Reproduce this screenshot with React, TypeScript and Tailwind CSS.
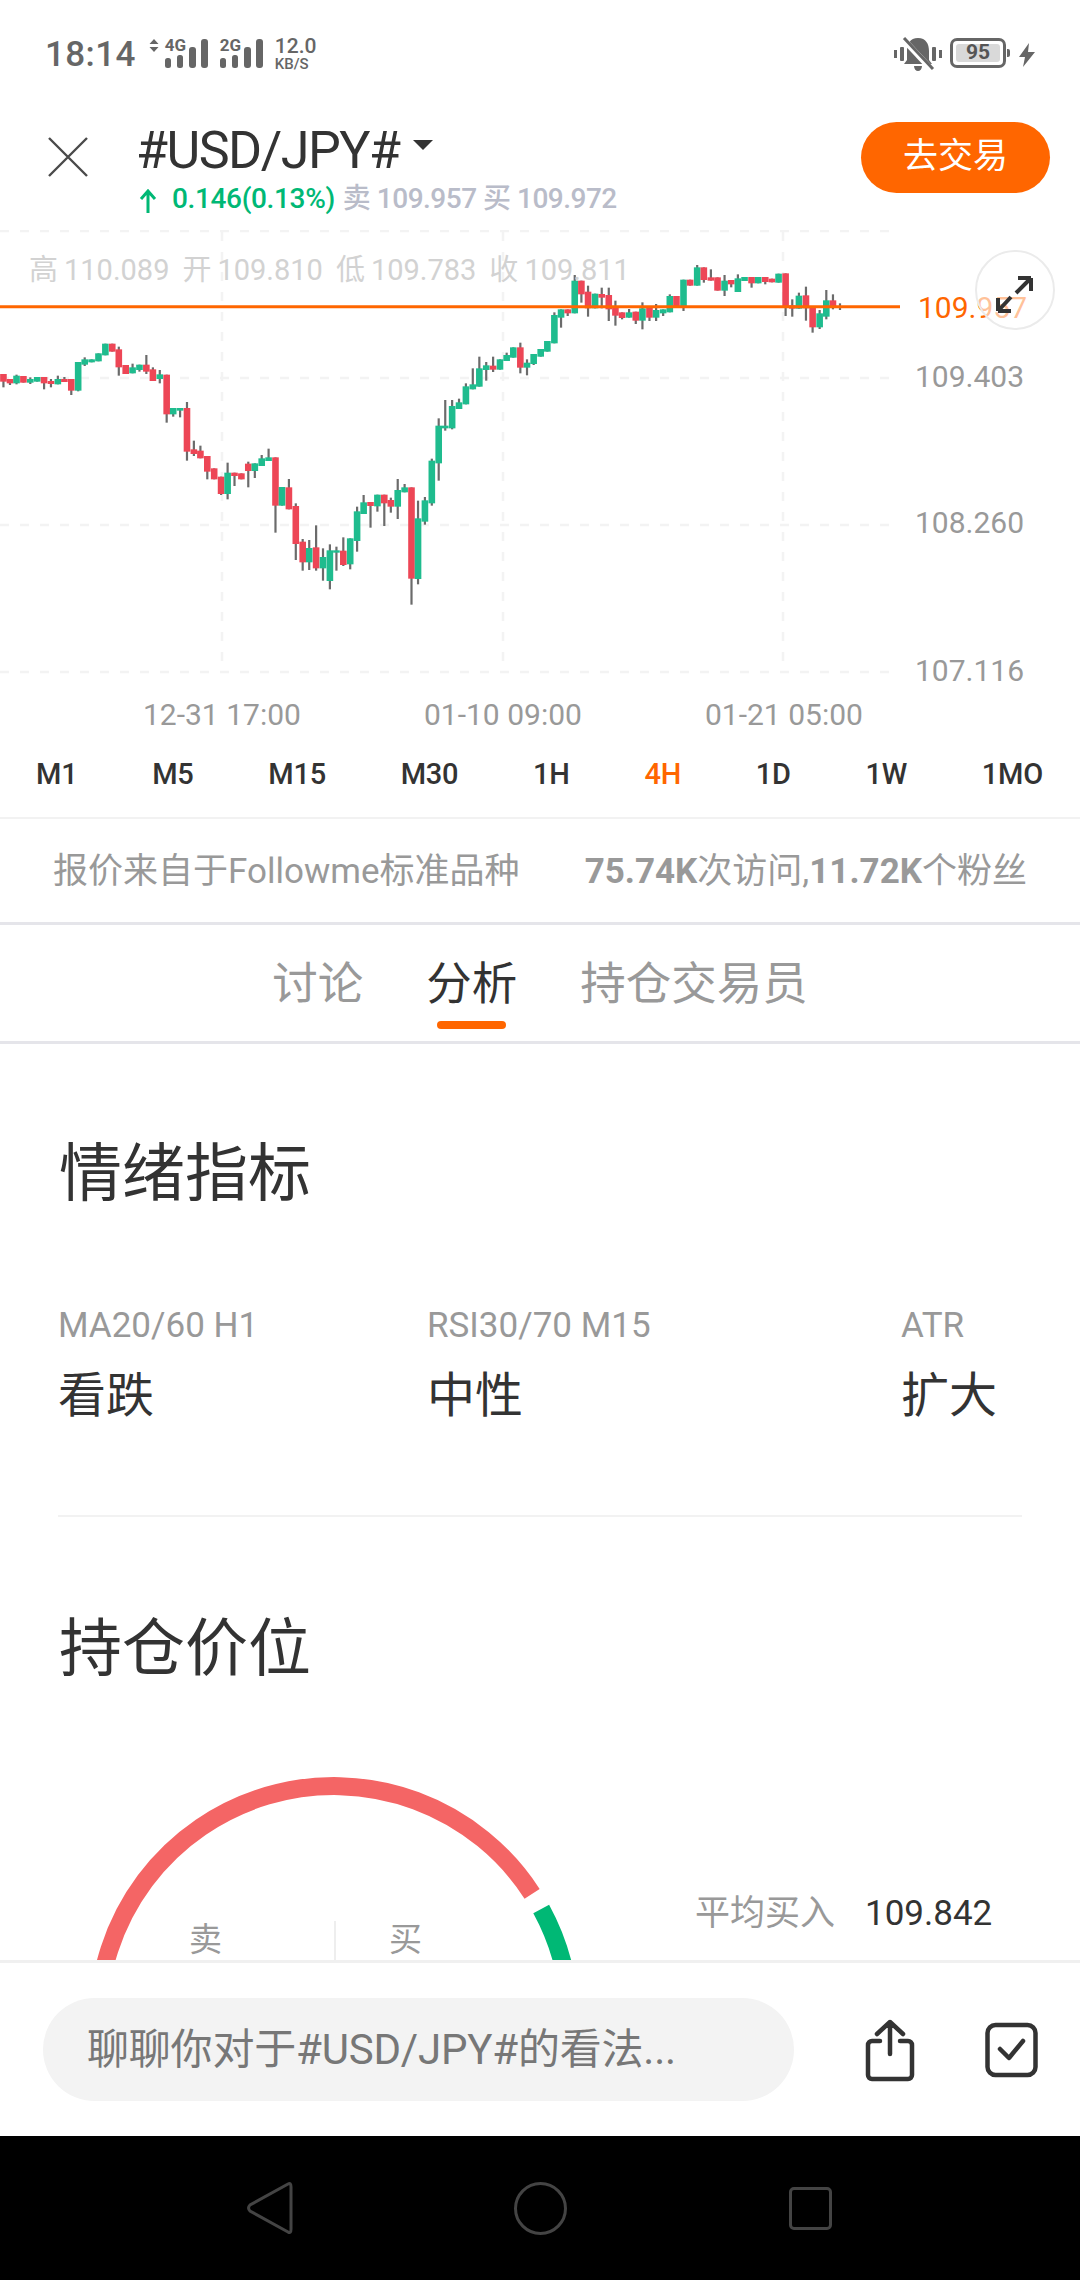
import React from "react";

type C = [number, number, number, number?, number?];
// [zoomX, bodyTop, bodyBottom, wickTop, wickBottom], colour chosen below
const g1: [string, ...C][] = [
  ["r",10,432,455,432,472],["r",29,447,460,447,465],["g",48,437,460,434,463],["r",68,438,458],["g",88,447,458,442,462],
  ["g",108,441,455],["r",128,441,460,441,478],["r",148,453,462,447,472],["g",168,447,463,437,463],["r",187,447,456,441,456],
  ["r",207,447,482,447,495],["g",227,396,482,396,484],["g",246,388,404,382,408],["g",266,388,397],["g",286,370,394],
  ["g",306,341,376],["r",326,341,365],["r",345,358,412,350,437],["r",365,405,432],["g",385,412,430,401,430],
  ["g",405,404,420,404,425],["r",425,404,425,375,432],["r",444,418,453,412,453],["g",464,433,447,420,460],["r",484,434,553,434,578],
  ["g",503,534,553,534,560],["g",523,534,542,534,562],["r",543,534,665,516,692],["r",563,658,672,632,678],["r",582,662,685,647,685],
  ["r",602,678,725,678,748],["r",622,715,748],["r",642,740,792,740,795],["g",661,728,792,698,808],["r",681,728,738,728,768],
  ["r",701,730,748],["r",721,701,723,695,772],["g",740,700,723,700,744],["g",760,685,708,675,708],["g",780,682,693,656,693],
  ["r",800,682,827,682,908],["g",819,771,827],["r",839,772,838,747,838],["r",859,828,942,820,990],["r",879,935,997,927,1022],
  ["g",898,954,997,930,1020],["r",918,952,1015,886,1022],["g",938,981,1015,955,1052],["g",958,961,1053,943,1078],["g",977,961,968,950,1022],
  ["r",997,962,1005,922,1008],["g",1017,925,1003,925,1018],["g",1037,844,933,830,965],["g",1056,817,852,795,852],["r",1076,816,828,816,893],
  ["g",1096,794,829,794,845],["r",1116,794,820,794,888],["r",1135,810,830,803,848],["g",1155,780,830,747,867],["g",1175,772,787,762,787],
  ["r",1195,772,1046,772,1124],["g",1214,865,1047,812,1063],["g",1234,811,875,801,884],["g",1254,692,820,686,827],["g",1274,587,700,565,752],
  ["g",1293,587,595,510,602],["g",1313,528,595,510,598],["g",1333,517,537,506,537],["g",1353,469,523,460,523],["g",1373,463,478,415,478],
  ["g",1392,415,470,380,470],["g",1412,406,420,396,452],["r",1432,407,419,380,426],["g",1452,388,419],
];
const g2: [string, ...C][] = [
  ["g",18,375,393,368,393],["g",36,352,383],["r",55,352,413,338,430],["g",73,398,413,388,436],["g",91,372,402,372,405],
  ["g",110,357,380],["g",128,333,365],["g",147,255,340,247,340],["g",165,238,263,238,293],["r",183,238,250,238,258],
  ["g",202,152,250,135,250],["r",220,152,193,152,218],["r",238,185,235,167,260],["g",257,191,235],["r",275,192,203,173,235],
  ["r",294,195,238,173,273],["r",312,228,257,212,287],["r",330,247,264,247,268],["g",349,247,263,237,263],["r",367,245,272,245,282],
  ["g",385,235,272,217,298],["r",404,232,263,232,273],["g",422,240,263,222,273],["g",441,238,250,238,258],["g",459,198,247,193,247],
  ["r",477,198,232],["g",496,149,230,149,243],["r",514,149,167],["g",533,112,167,105,167],["r",551,112,150,112,158],
  ["r",570,142,152,118,152],["r",588,142,182],["g",607,152,182,135,198],["r",625,150,163,150,172],["g",643,145,186,133,186],
  ["g",661,141,153],["r",680,141,160,141,173],["g",698,141,160],["r",717,141,156,141,163],["r",735,146,157],
  ["g",753,131,158],["r",772,130,230,130,258],["r",790,226,236,208,260],["g",808,197,236,188,236],["r",827,196,235,170,272],
  ["r",845,230,292,230,308],["g",864,250,292,240,297],["g",882,211,260,180,268],["r",900,211,232,193,238],["r",919,228,232,220,240],
];

const candles = [
  ...g1.map(([c, x, t, b, wt, wb]) => ({ c, x: x / 2.904, t, b, wt: wt ?? t, wb: wb ?? b })),
  ...g2.map(([c, x, t, b, wt, wb]) => ({ c, x: 500 + x / 2.703, t, b, wt: wt ?? t, wb: wb ?? b })),
];
const yy = (v: number) => 230 + v / 3;

function ChartSvg() {
  return (
    <svg className="absolute left-0 top-0" width="1080" height="502" viewBox="0 230 1080 502">
      <g stroke="#f3f3f3" strokeWidth="2.5" strokeDasharray="9 11">
        {[231, 378, 525, 672].map((y) => (
          <line key={y} x1="0" x2="890" y1={y} y2={y} />
        ))}
        {[222, 503, 783].map((x) => (
          <line key={x} x1={x} x2={x} y1="232" y2="672" />
        ))}
      </g>
      {candles.map((k, i) => (
        <line key={i} x1={k.x} x2={k.x} y1={yy(k.wt)} y2={yy(k.wb)} stroke="#6b6b6b" strokeWidth="2.2" />
      ))}
      {candles.map((k, i) => (
        <rect key={i} x={k.x - 3.3} width="6.6" y={yy(k.t)} height={Math.max((k.b - k.t) / 3, 2)} fill={k.c === "g" ? "#1fbc8e" : "#ed4656"} />
      ))}
      <line x1="0" x2="900" y1="306.7" y2="306.7" stroke="#ff6600" strokeWidth="3" />
    </svg>
  );
}

function Signal({ label }: { label: string }) {
  return (
    <div className="relative w-[44px] h-[30px] shrink-0">
      <svg width="44" height="30" viewBox="0 0 44 30" className="block">
        <rect x="0" y="19" width="6" height="10" rx="2.5" fill="#666" />
        <rect x="12" y="16" width="6" height="13" rx="2.5" fill="#666" />
        <rect x="24" y="8" width="7" height="21" rx="3" fill="#666" />
        <rect x="36" y="0" width="7" height="29" rx="3" fill="#666" />
      </svg>
      <span className="absolute left-0 top-0 text-[17px] leading-[12px] font-bold">{label}</span>
    </div>
  );
}

function StatusBar() {
  return (
    <div className="h-[100px] flex items-start pt-[39px] text-[#666]">
      <span className="ml-[45px] text-[35px] leading-[32px] tracking-[0.4px] font-medium">18:14</span>
      <svg width="10" height="13" viewBox="0 0 10 13" className="ml-[13px] shrink-0">
        <path d="M5 0 L9.5 5 H0.5 Z M5 13 L9.5 8 H0.5 Z" fill="#666" />
      </svg>
      <div className="ml-[6px]"><Signal label="4G" /></div>
      <div className="ml-[11px]"><Signal label="2G" /></div>
      <div className="ml-[11px] flex flex-col font-medium">
        <span className="text-[21px] leading-[15px]">12.0</span>
        <span className="text-[15px] leading-[14px] mt-[3px]">KB/S</span>
      </div>
      <svg width="48" height="34" viewBox="0 0 48 34" className="ml-auto -mt-[2px] shrink-0">
        <rect x="0" y="13" width="3" height="8" fill="#666" />
        <rect x="6" y="10" width="4" height="14" rx="1" fill="#666" />
        <rect x="38" y="10" width="4" height="14" rx="1" fill="#666" />
        <rect x="45" y="13" width="3" height="8" fill="#666" />
        <path d="M24 1 C16 1 13 7 13 14 V23 L10 27 H38 L35 23 V14 C35 7 32 1 24 1 Z M20 29 H28 C28 32 26 34 24 34 C22 34 20 32 20 29 Z" fill="#666" />
        <line x1="8" y1="1" x2="38" y2="33" stroke="#fff" strokeWidth="6" />
        <line x1="10" y1="1" x2="39" y2="32" stroke="#666" strokeWidth="3" />
      </svg>
      <div className="ml-[8px] relative w-[56px] h-[30px] -mt-[1px] rounded-[7px] border-[3px] border-[#666] p-[3px] shrink-0">
        <div className="w-full h-full rounded-[3px] bg-[#d9d9d9] flex items-center justify-center text-[21px] font-bold text-[#555]">95</div>
        <div className="absolute -right-[7px] top-[8px] w-[3px] h-[8px] bg-[#666] rounded-r-[2px]" />
      </div>
      <svg width="16" height="24" viewBox="0 0 16 24" className="ml-[13px] mr-[45px] mt-[4px] shrink-0">
        <path d="M10 0 L0 14 H6 L4 24 L16 9 H9 Z" fill="#666" />
      </svg>
    </div>
  );
}

function Header() {
  return (
    <div className="h-[130px] flex items-start">
      <svg width="42" height="42" viewBox="0 0 42 42" className="ml-[47px] mt-[36px] shrink-0">
        <path d="M2 2 L40 40 M40 2 L2 40" stroke="#4a4a4a" strokeWidth="2.4" />
      </svg>
      <div className="ml-[50px] mt-[26px] flex flex-col">
        <div className="flex items-center h-[50px]">
          <span className="-ml-[3px] text-[52px] leading-[50px] text-[#333] tracking-[-1.5px]">#USD/JPY#</span>
          <svg width="20" height="10" viewBox="0 0 20 10" className="ml-[14px] -mt-[13px]">
            <path d="M0 0 H20 L10 10 Z" fill="#333" />
          </svg>
        </div>
        <div className="flex items-center h-[36px] mt-[5px] text-[28px] leading-[36px]">
          <svg width="18" height="24" viewBox="0 0 18 24" className="mr-[15px] mt-[3px]">
            <path d="M9 24 V2 M2 10 L9 2 L16 10" stroke="#00b875" strokeWidth="3" fill="none" />
          </svg>
          <span className="text-[#00b875] font-medium tracking-[-0.35px]">0.146(0.13%)</span>
          <span className="text-[#b9bcc9] ml-[8px] font-medium tracking-[-0.5px]">卖 109.957 买 109.972</span>
        </div>
      </div>
      <button className="ml-auto mr-[30px] mt-[22px] w-[189px] h-[71px] rounded-full bg-[#ff6600] text-white text-[35px]">去交易</button>
    </div>
  );
}

function Chart() {
  const hl = [
    ["高", "110.089"],
    ["开", "109.810"],
    ["低", "109.783"],
    ["收", "109.811"],
  ];
  return (
    <div className="relative h-[502px] shrink-0">
      <ChartSvg />
      <div className="absolute left-[29px] top-[22px] flex gap-[13px] text-[29px] leading-[36px] text-[#d2d2d2]">
        {hl.map(([a, b]) => (
          <span key={a} className="flex gap-[6px]"><span>{a}</span><span>{b}</span></span>
        ))}
      </div>
      <span className="absolute left-[918px] top-[60px] text-[30px] leading-[36px] text-[#ff6600]">109.957</span>
      <span className="absolute left-[915px] top-[129px] text-[30px] leading-[36px] text-[#999]">109.403</span>
      <span className="absolute left-[915px] top-[275px] text-[30px] leading-[36px] text-[#999]">108.260</span>
      <span className="absolute left-[915px] top-[423px] text-[30px] leading-[36px] text-[#999]">107.116</span>
      <span className="absolute left-[143px] top-[467px] text-[30px] leading-[36px] text-[#999]">12-31 17:00</span>
      <span className="absolute left-[424px] top-[467px] text-[30px] leading-[36px] text-[#999]">01-10 09:00</span>
      <span className="absolute left-[705px] top-[467px] text-[30px] leading-[36px] text-[#999]">01-21 05:00</span>
      <div className="absolute left-[975px] top-[20px] w-[80px] h-[80px] rounded-full border-[2px] border-[#ebebeb] bg-white/60">
        <svg width="76" height="76" viewBox="0 0 76 76">
          <path d="M54 26 L39 41 M54 26 H41 M54 26 V39 M21 59 L34 45 M21 59 H34 M21 59 V46" stroke="#333" strokeWidth="4" fill="none" />
        </svg>
      </div>
    </div>
  );
}

function Timeframes() {
  const items = ["M1", "M5", "M15", "M30", "1H", "4H", "1D", "1W", "1MO"];
  return (
    <div className="h-[87px] shrink-0 flex items-center justify-between pl-[36px] pr-[37px] border-b-[2px] border-[#f2f2f2] text-[29px] tracking-[-0.2px] font-medium text-[#333]">
      {items.map((t) => (
        <span key={t} className={t === "4H" ? "text-[#ff6600]" : ""}>{t}</span>
      ))}
    </div>
  );
}

function Info() {
  return (
    <div className="h-[106px] shrink-0 flex items-center justify-between px-[53px] pt-[3px] border-b-[3px] border-[#e5e5ea] text-[35px] text-[#999]">
      <span>报价来自于Followme标准品种</span>
      <span><b className="font-bold">75.74K</b>次访问,<b className="font-bold">11.72K</b>个粉丝</span>
    </div>
  );
}

function Tabs() {
  const tabs = ["讨论", "分析", "持仓交易员"];
  return (
    <div className="h-[119px] shrink-0 flex justify-center gap-[63px] border-b-[3px] border-[#e5e5ea] pt-[33px]">
      {tabs.map((t) => (
        <div key={t} className="flex flex-col items-center">
          <span className={"text-[45.5px] leading-[54px] " + (t === "分析" ? "text-[#333]" : "text-[#999]")}>{t}</span>
          {t === "分析" && <div className="mt-[9px] w-[69px] h-[8px] rounded-full bg-[#ff6600]" />}
        </div>
      ))}
    </div>
  );
}

function Metric({ label, value, cls }: { label: string; value: string; cls: string }) {
  return (
    <div className={"flex flex-col " + cls}>
      <span className="text-[35px] leading-[40px] text-[#999]">{label}</span>
      <span className="mt-[20px] text-[48px] leading-[60px] text-[#333]">{value}</span>
    </div>
  );
}

function Gauge() {
  return (
    <div className="flex items-start mt-[86px]">
      <div className="relative w-[668px] h-[260px] shrink-0">
        <svg width="668" height="260" viewBox="0 0 668 260" className="block">
          <path d="M98 252 A236 236 0 0 1 532.1 123.8" stroke="#f46565" strokeWidth="18" fill="none" />
          <path d="M541.2 139 A236 236 0 0 1 570 252" stroke="#00b875" strokeWidth="18" fill="none" />
        </svg>
        <span className="absolute left-[189px] top-[150px] text-[33px] leading-[40px] text-[#999]">卖</span>
        <span className="absolute left-[389px] top-[150px] text-[33px] leading-[40px] text-[#999]">买</span>
        <div className="absolute left-[334px] top-[151px] w-[2px] h-[60px] bg-[#eeeeee]" />
      </div>
      <div className="ml-[27px] mt-[122px] flex items-center gap-[30px] leading-[44px]">
        <span className="text-[35px] text-[#999]">平均买入</span>
        <span className="text-[35px] text-[#333]">109.842</span>
      </div>
    </div>
  );
}

function Analysis() {
  return (
    <div className="flex-1 min-h-0 overflow-hidden pt-[95px]">
      <h2 className="ml-[59px] text-[63px] leading-[70px] text-[#333]">情绪指标</h2>
      <div className="flex mt-[97px] ml-[58px]">
        <Metric label="MA20/60 H1" value="看跌" cls="w-[369px]" />
        <Metric label="RSI30/70 M15" value="中性" cls="w-[474px]" />
        <Metric label="ATR" value="扩大" cls="" />
      </div>
      <div className="mx-[58px] mt-[89px] h-[2px] bg-[#f2f2f2]" />
      <h2 className="ml-[59px] mt-[97px] text-[63px] leading-[70px] text-[#333]">持仓价位</h2>
      <Gauge />
    </div>
  );
}

function Footer() {
  return (
    <div className="h-[176px] shrink-0 flex items-center border-t-[3px] border-[#f0f0f0] bg-white">
      <div className="ml-[43px] w-[751px] h-[103px] rounded-full bg-[#f3f3f3] pl-[44px] flex items-center text-[42px] tracking-[-0.2px] text-[#777] shrink-0">
        聊聊你对于#USD/JPY#的看法...
      </div>
      <svg width="52" height="64" viewBox="0 0 52 64" className="ml-[70px] shrink-0">
        <path d="M16 23 H8 A4 4 0 0 0 4 27 V57 A4 4 0 0 0 8 61 H44 A4 4 0 0 0 48 57 V27 A4 4 0 0 0 44 23 H36 M26 4 V36 M13 16 L26 4 L39 16" stroke="#333" strokeWidth="4.5" fill="none" strokeLinecap="round" strokeLinejoin="round" />
      </svg>
      <svg width="53" height="56" viewBox="0 0 53 56" className="ml-[69px] shrink-0">
        <rect x="2.5" y="3" width="48" height="50" rx="8" stroke="#333" strokeWidth="4.5" fill="none" />
        <path d="M15 27 L24 36 L38 19" stroke="#333" strokeWidth="4.5" fill="none" strokeLinecap="round" strokeLinejoin="round" />
      </svg>
    </div>
  );
}

function NavBar() {
  return (
    <div className="h-[144px] shrink-0 bg-black flex justify-center items-center">
      <div className="w-[270px] flex justify-center">
        <svg width="46" height="54" viewBox="0 0 46 54">
          <path d="M41 3 Q44 1 44 6 V48 Q44 53 41 51 L3 30 Q0 27 3 24 Z" stroke="#444" strokeWidth="3" fill="none" />
        </svg>
      </div>
      <div className="w-[270px] flex justify-center">
        <div className="w-[53px] h-[53px] rounded-full border-[3px] border-[#444]" />
      </div>
      <div className="w-[270px] flex justify-center">
        <div className="w-[43px] h-[43px] rounded-[5px] border-[3px] border-[#444]" />
      </div>
    </div>
  );
}

export default function App() {
  return (
    <div className="w-[1080px] h-[2280px] flex flex-col bg-white overflow-hidden font-['Roboto','Noto_Sans_CJK_SC',sans-serif]">
      <StatusBar />
      <Header />
      <Chart />
      <Timeframes />
      <Info />
      <Tabs />
      <Analysis />
      <Footer />
      <NavBar />
    </div>
  );
}
